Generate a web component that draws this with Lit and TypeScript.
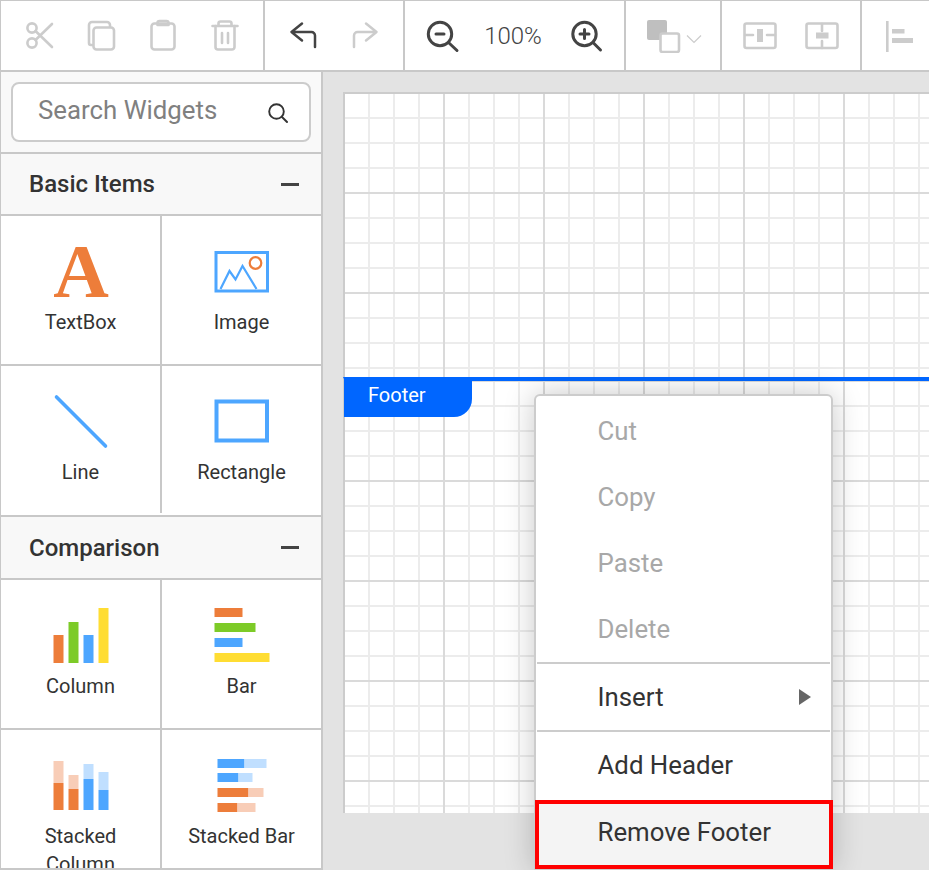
import { LitElement, html, svg, css } from "lit";
import { customElement } from "lit/decorators.js";

const ORANGE = "#ed7d3a";
const BLUE = "#4da6ff";
const GREEN = "#7dcb28";
const YELLOW = "#ffdd33";
const LIGHT_ORANGE = "#f8cdb7";
const LIGHT_BLUE = "#c0dfff";

// viewBoxes below use the screen coordinates read off the reference, it keeps the numbers comparable
const toolIcon = (x: number, body: unknown) => html`
  <svg class="tool" width="34" height="34" viewBox="${x} 19 34 34" fill="none" stroke-linecap="round" stroke-linejoin="round">${body}</svg>
`;

const scissors = toolIcon(22, svg`
  <g stroke="#ccc" stroke-width="2.600">
    <circle cx="32" cy="28" r="4.600"></circle>
    <circle cx="32" cy="43" r="4.600"></circle>
    <path d="M52 24 35.500 40M52 47 35.500 31"></path>
  </g>`);
const copy = toolIcon(84, svg`
  <g stroke="#ccc" stroke-width="2.600">
    <path d="M92 45h-1a2 2 0 0 1-2-2V25a3 3 0 0 1 3-3h15a3 3 0 0 1 3 3v2"></path>
    <rect x="93.500" y="27.500" width="20.500" height="22" rx="3"></rect>
  </g>`);
const paste = toolIcon(146, svg`
  <g stroke="#ccc" stroke-width="2.600">
    <rect x="151.500" y="23.500" width="23" height="26" rx="3"></rect>
    <path d="M157.500 25v-2a2 2 0 0 1 2-2h7a2 2 0 0 1 2 2v2z"></path>
  </g>`);
const trash = toolIcon(208, svg`
  <g stroke="#ccc" stroke-width="2.600">
    <path d="M212.500 26h25M218.500 26v-2.500a2 2 0 0 1 2-2h9a2 2 0 0 1 2 2V26"></path>
    <path d="M215.500 26v21a2.500 2.500 0 0 0 2.500 2.500h14a2.500 2.500 0 0 0 2.500-2.500V26"></path>
    <path d="M222 33v10M228 33v10"></path>
  </g>`);
const undo = toolIcon(286, svg`
  <path stroke="#444" stroke-width="2.500" d="M302 23.500 291.500 32 302 40.500M292 32h19.500a3.500 3.500 0 0 1 3.500 3.500V47"></path>`);
const redo = toolIcon(348, svg`
  <path stroke="#ccc" stroke-width="2.500" d="M366 23.500 376.500 32 366 40.500M376 32h-18.500a3.500 3.500 0 0 0-3.500 3.500V47"></path>`);
const zoomOut = toolIcon(426, svg`
  <g stroke="#444" stroke-width="3">
    <circle cx="440" cy="34" r="11.700"></circle>
    <path d="M448.500 42.500 457 50.500"></path>
    <path d="M436 34h8"></path>
  </g>`);
const zoomIn = toolIcon(569, svg`
  <g stroke="#444" stroke-width="3">
    <circle cx="584.500" cy="34" r="11.700"></circle>
    <path d="M593 42.500 600.500 50"></path>
    <path d="M580 34h9M584.500 29.500v9"></path>
  </g>`);
const fillColor = html`
  <svg class="tool" width="65" height="34" viewBox="640 19 65 34" fill="none">
    <rect x="647" y="20" width="20" height="20" rx="2" fill="#bfbfbf"></rect>
    <rect x="660.500" y="33.500" width="18.500" height="18.500" rx="2" fill="#fff" stroke="#ccc" stroke-width="2.600"></rect>
    <path d="M687 35.500 694 42.500 701 35.500" stroke="#ccc" stroke-width="1.200"></path>
  </svg>`;
const sendBack = toolIcon(743, svg`
  <rect x="744.500" y="23.500" width="31" height="24.500" rx="2" stroke="#ccc" stroke-width="2.600"></rect>
  <path d="M745 35h8M767 35h8" stroke="#ccc" stroke-width="2.600"></path>
  <rect x="757" y="29" width="6" height="13" fill="#ccc"></rect>`);
const bringFront = toolIcon(805, svg`
  <rect x="806.500" y="23.500" width="31" height="24.500" rx="2" stroke="#ccc" stroke-width="2.600"></rect>
  <path d="M822 24v7M822 41v7" stroke="#ccc" stroke-width="2.600"></path>
  <rect x="816" y="32.500" width="12.500" height="6" fill="#ccc"></rect>`);
const alignLeft = toolIcon(883, svg`
  <rect x="886" y="21" width="2.600" height="31" fill="#ccc"></rect>
  <rect x="892" y="29" width="12.500" height="4.500" fill="#ccc"></rect>
  <rect x="892" y="38" width="21" height="5" fill="#ccc"></rect>`);

const bars = (list: [number, number, number, number, string][]) =>
  list.map(([x, y, w, h, c]) => svg`<rect x=${x} y=${y} width=${w} height=${h} fill=${c}></rect>`);

const widgetIcon = (x: number, y: number, body: unknown) => html`
  <svg class="glyph" width="62" height="62" viewBox="${x} ${y} 62 62" fill="none">${body}</svg>
`;

const basicItems = [
  {
    label: "TextBox",
    icon: widgetIcon(49.5, 240, svg`<text class="big-a" x="80.5" y="297" text-anchor="middle">A</text>`),
  },
  {
    label: "Image",
    icon: widgetIcon(210.5, 240, svg`
      <rect x="215.500" y="252.500" width="51.500" height="38.500" stroke=${BLUE} stroke-width="3"></rect>
      <path d="M220 289 229 271 235 279.500 242 266 256 289" stroke=${BLUE} stroke-width="2.200"></path>
      <circle cx="255" cy="263" r="5.800" stroke=${ORANGE} stroke-width="2.200"></circle>`),
  },
  {
    label: "Line",
    icon: widgetIcon(49.5, 390, svg`<path d="M56 397 105 446" stroke=${BLUE} stroke-width="3.600" stroke-linecap="round"></path>`),
  },
  {
    label: "Rectangle",
    icon: widgetIcon(210.5, 390, svg`<rect x="216" y="401.500" width="50.500" height="39" stroke=${BLUE} stroke-width="4"></rect>`),
  },
];

const comparison = [
  {
    label: "Column",
    icon: widgetIcon(49.5, 604, bars([
      [53, 635, 10, 28, ORANGE],
      [68, 622, 10, 41, GREEN],
      [83, 635, 10, 28, BLUE],
      [98, 608, 10, 55, YELLOW],
    ])),
  },
  {
    label: "Bar",
    icon: widgetIcon(210.5, 604, bars([
      [214, 608, 28, 9, ORANGE],
      [214, 623, 41, 9, GREEN],
      [214, 638, 28, 9, BLUE],
      [214, 653, 55, 9, YELLOW],
    ])),
  },
  {
    label: "Stacked Column",
    icon: widgetIcon(49.5, 754, bars([
      [53, 761, 10, 22, LIGHT_ORANGE],
      [53, 783, 10, 27, ORANGE],
      [68, 775, 10, 14, LIGHT_ORANGE],
      [68, 789, 10, 21, ORANGE],
      [83, 764, 10, 15, LIGHT_BLUE],
      [83, 779, 10, 31, BLUE],
      [98, 772, 10, 18, LIGHT_BLUE],
      [98, 790, 10, 20, BLUE],
    ])),
  },
  {
    label: "Stacked Bar",
    icon: widgetIcon(210.5, 754, bars([
      [217, 759, 27, 9, BLUE],
      [244, 759, 22, 9, LIGHT_BLUE],
      [217, 773, 21, 9, BLUE],
      [238, 773, 14, 9, LIGHT_BLUE],
      [217, 788, 31, 9, ORANGE],
      [248, 788, 15, 9, LIGHT_ORANGE],
      [217, 803, 20, 9, ORANGE],
      [237, 803, 18, 9, LIGHT_ORANGE],
    ])),
  },
];

@customElement("app-root")
export class AppRoot extends LitElement {
  static styles = css`
    :host {
      display: block;
      height: 870px;
      overflow: hidden;
      position: relative;
      background: #fff;
      font-family: Roboto, sans-serif;
      color: #333;
    }

    svg {
      display: block;
      flex: none;
    }

    .toolbar {
      display: flex;
      height: 72px;
      box-sizing: border-box;
      border-top: 1px solid #c8c8c8;
      border-bottom: 2px solid #c8c8c8;
      border-left: 1px solid #c8c8c8;
    }

    .group {
      display: flex;
      flex: none;
      box-sizing: border-box;
      padding: 18px 21px 0;
      gap: 28px;
      border-right: 2px solid #c8c8c8;
    }

    .g1 { width: 264px; }
    .g2 { width: 140px; }
    .g3 { width: 221px; gap: 0; justify-content: space-between; }
    .g4 { width: 96px; padding: 18px 14px 0; }
    .g5 { width: 140px; }
    .g6 { border-right: 0; }

    .zoom-value {
      font-size: 24px;
      line-height: 34px;
      font-weight: 300;
      color: #444;
      margin-left: -3px;
    }

    .main {
      display: flex;
      height: 798px;
    }

    .sidebar {
      width: 323px;
      flex: none;
      box-sizing: border-box;
      border-left: 1px solid #c8c8c8;
      border-right: 2px solid #c8c8c8;
      overflow: hidden;
    }

    .search-wrap {
      height: 82px;
      box-sizing: border-box;
      padding: 10px;
      background: #f9f9f9;
      border-bottom: 2px solid #c8c8c8;
    }

    .search {
      display: flex;
      align-items: center;
      justify-content: space-between;
      height: 60px;
      width: 300px;
      box-sizing: border-box;
      padding: 0 20px 0 25px;
      background: #fff;
      border: 2px solid #ccc;
      border-radius: 8px;
      color: #808080;
      font-size: 25.8px;
    }

    .search span {
      padding-bottom: 4px;
    }

    .section-head {
      display: flex;
      align-items: center;
      justify-content: space-between;
      height: 62px;
      box-sizing: border-box;
      padding: 0 22px 0 28px;
      background: #f8f8f8;
      border-bottom: 2px solid #c8c8c8;
      font-size: 24px;
      font-weight: 500;
    }

    .grid + .section-head {
      height: 63px;
    }

    .minus {
      width: 18px;
      height: 3px;
      background: #444;
    }

    .grid {
      display: grid;
      grid-template-columns: 159px 159px;
      column-gap: 2px;
      border-bottom: 2px solid #c8c8c8;
      background: linear-gradient(#c8c8c8, #c8c8c8) 159px 0 / 2px calc(100% - 2px) no-repeat;
    }

    .cell {
      display: flex;
      flex-direction: column;
      align-items: center;
      height: 149px;
      box-sizing: border-box;
      padding-top: 24px;
      gap: 6px;
      text-align: center;
      font-size: 20px;
      line-height: 28px;
    }

    .cell:nth-child(-n + 2) {
      height: 150px;
      border-bottom: 2px solid #c8c8c8;
    }

    .grid.cut {
      background-size: 2px 100%;
    }

    .grid.cut .cell:nth-child(n + 3) {
      height: 138px;
      overflow: hidden;
    }

    .glyph {
      overflow: visible;
    }

    .cell .label {
      width: 120px;
    }

    .big-a {
      font-family: "Liberation Serif", serif;
      font-weight: 700;
      font-size: 77px;
      fill: #ed7d3a;
    }

    .canvas {
      flex: 1;
      min-width: 0;
      background: #e3e3e3;
      padding: 20px 0 0 20px;
      overflow: hidden;
    }

    .paper {
      height: 721px;
      display: flex;
      flex-direction: column;
    }

    .band {
      box-sizing: border-box;
      border-left: 2px solid #ccc;
      background-color: #fff;
      background-image:
        linear-gradient(#dadada 0 2px, transparent 2px),
        linear-gradient(90deg, #dadada 0 2px, transparent 2px),
        linear-gradient(#ececec 0 2px, transparent 2px),
        linear-gradient(90deg, #ececec 0 2px, transparent 2px);
      background-size: 100px 100px, 100px 100px, 25px 25px, 25px 25px;
    }

    .band-body {
      height: 285px;
      border-top: 2px solid #ccc;
      background-position: -2px -2px;
    }

    .band-footer {
      flex: 1;
      position: relative;
      border-top: 4px solid #0066ff;
      background-position: -2px -1px;
    }

    .footer-tab {
      position: absolute;
      left: -1px;
      top: -4px;
      width: 128px;
      height: 40px;
      box-sizing: border-box;
      padding-left: 24px;
      background: #0066ff;
      border-bottom-right-radius: 18px;
      color: #fff;
      font-size: 20px;
      line-height: 37px;
    }

    .menu {
      position: absolute;
      left: 534px;
      top: 394px;
      width: 299px;
      box-sizing: border-box;
      padding-top: 2px;
      background: #fff;
      border: 2px solid #ccc;
      border-radius: 6px 6px 0 0;
      box-shadow: 0 0 30px rgba(0, 0, 0, 0.22);
      font-size: 25.8px;
    }

    .item {
      display: flex;
      align-items: center;
      justify-content: space-between;
      height: 66px;
      padding: 0 20px 0 61.5px;
    }

    .item.off {
      color: #a8a8a8;
    }

    .rule {
      height: 2px;
      margin: 0 1px;
      background: #ccc;
    }

    .item.marked {
      height: 69px;
      box-sizing: border-box;
      margin: 2px -2px 0 -1px;
      padding-left: 58.5px;
      padding-bottom: 6px;
      background: #f4f4f4;
      border: 4px solid #ff0000;
    }
  `;

  private grid(items: { label: string; icon: unknown }[], cut = false) {
    return html`
      <div class="grid ${cut ? "cut" : ""}">
        ${items.map(
          (it) => html`
            <div class="cell">
              ${it.icon}
              <div class="label">${it.label}</div>
            </div>
          `
        )}
      </div>
    `;
  }

  render() {
    return html`
      <div class="toolbar">
        <div class="group g1">${scissors}${copy}${paste}${trash}</div>
        <div class="group g2">${undo}${redo}</div>
        <div class="group g3">${zoomOut}<span class="zoom-value">100%</span>${zoomIn}</div>
        <div class="group g4">${fillColor}</div>
        <div class="group g5">${sendBack}${bringFront}</div>
        <div class="group g6">${alignLeft}</div>
      </div>
      <div class="main">
        <aside class="sidebar">
          <div class="search-wrap">
            <div class="search">
              <span>Search Widgets</span>
              <svg width="22" height="22" viewBox="269 103 22 22" fill="none" stroke="#333" stroke-width="1.900" stroke-linecap="round">
                <circle cx="278.500" cy="113.500" r="7.300"></circle>
                <path d="M284 119 289 124"></path>
              </svg>
            </div>
          </div>
          <div class="section-head">Basic Items<span class="minus"></span></div>
          ${this.grid(basicItems)}
          <div class="section-head">Comparison<span class="minus"></span></div>
          ${this.grid(comparison, true)}
        </aside>
        <section class="canvas">
          <div class="paper">
            <div class="band band-body"></div>
            <div class="band band-footer">
              <div class="footer-tab">Footer</div>
            </div>
          </div>
        </section>
      </div>
      <div class="menu">
        <div class="item off">Cut</div>
        <div class="item off">Copy</div>
        <div class="item off">Paste</div>
        <div class="item off">Delete</div>
        <div class="rule"></div>
        <div class="item">
          Insert
          <svg width="12" height="16" viewBox="0 0 12 16"><path d="M0 0 12 8 0 16z" fill="#666"></path></svg>
        </div>
        <div class="rule"></div>
        <div class="item">Add Header</div>
        <div class="item marked">Remove Footer</div>
      </div>
    `;
  }
}
